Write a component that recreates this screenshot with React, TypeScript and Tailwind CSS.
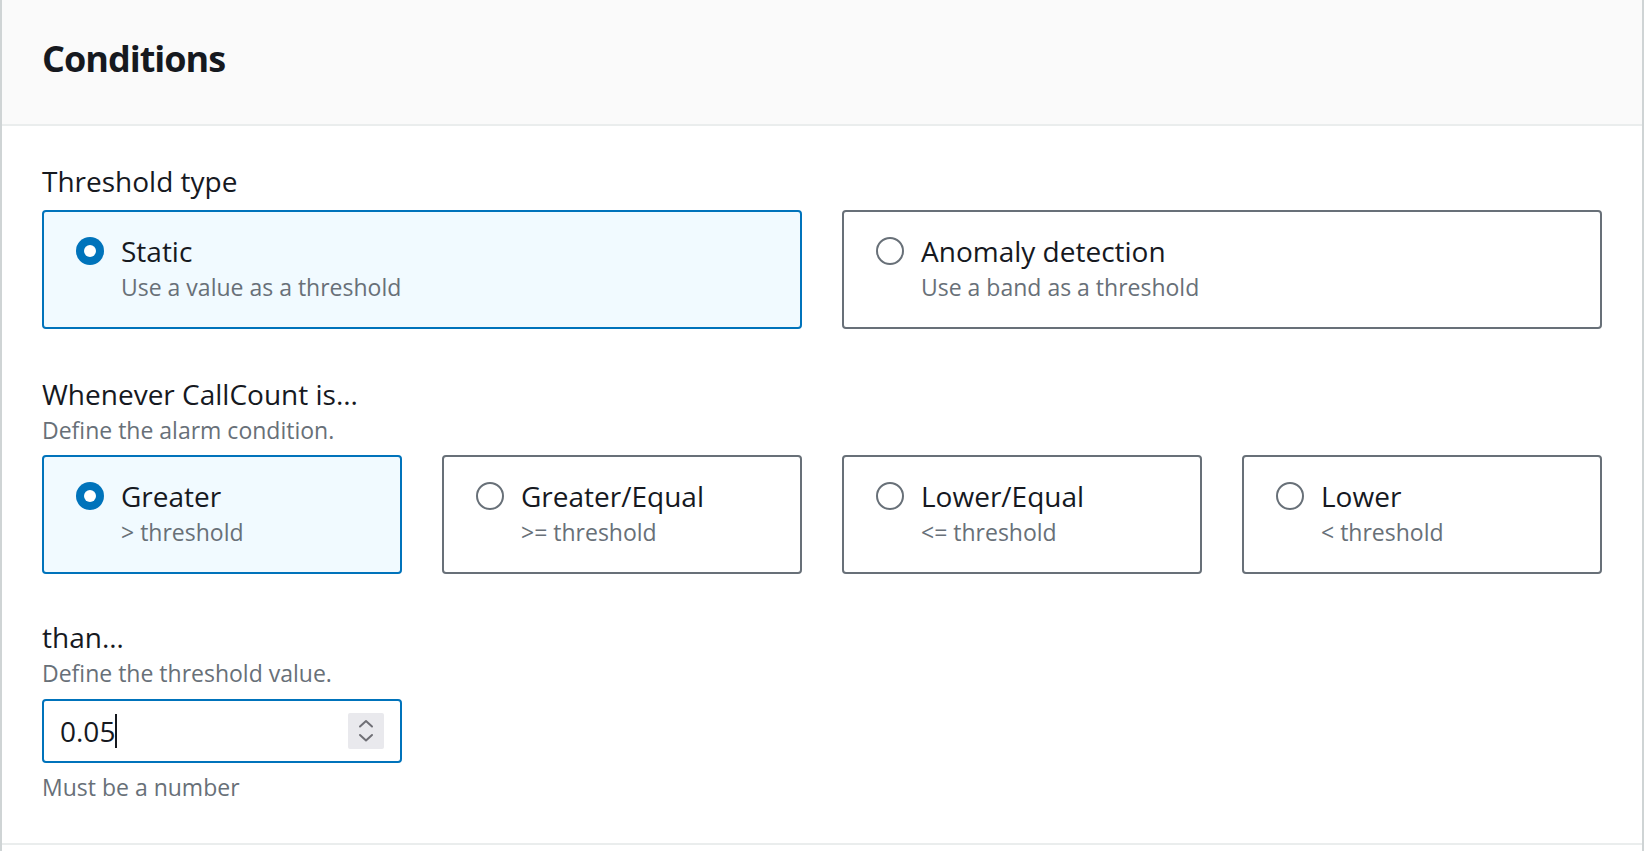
import React from "react";

function Radio({ checked }: { checked: boolean }) {
  return checked ? (
    <span className="mt-[6px] flex h-[28px] w-[28px] shrink-0 items-center justify-center rounded-full bg-[#0073bb]">
      <span className="h-[12px] w-[12px] rounded-full bg-white" />
    </span>
  ) : (
    <span className="mt-[6px] h-[28px] w-[28px] shrink-0 rounded-full border-2 border-[#687078] bg-white" />
  );
}

function Card({ title, desc, checked }: { title: string; desc: string; checked: boolean }) {
  return (
    <div
      className={
        checked
          ? "flex gap-[17px] rounded-[4px] border-2 border-[#0073bb] bg-[#f1faff] pl-[32px] pr-[20px] pt-[19px] pb-[24px]"
          : "flex gap-[17px] rounded-[4px] border-2 border-[#687078] bg-white pl-[32px] pr-[20px] pt-[19px] pb-[24px]"
      }
    >
      <Radio checked={checked} />
      <div>
        <div className="text-[28px] leading-[40px] text-[#16191f]">{title}</div>
        <div className="text-[23px] leading-[32px] text-[#687078]">{desc}</div>
      </div>
    </div>
  );
}

export default function App() {
  return (
    <div className="min-h-screen bg-white font-['Open_Sans',sans-serif] text-[#16191f]">
      <div className="min-h-screen border-x-2 border-[#cfd4d5]">
        <div className="h-[126px] border-b-2 border-[#eaeded] bg-[#fafafa] px-[40px] pt-[37px]">
          <h2 className="text-[36px] font-bold leading-[44px] tracking-[-1px] text-[#16191f]">Conditions</h2>
        </div>
        <div className="border-b-2 border-[#eaeded] px-[40px] pt-[35px] pb-[40px]">
          <div>
            <div className="text-[28px] leading-[40px]">Threshold type</div>
            <div className="mt-[9px] grid grid-cols-2 gap-[40px]">
              <Card checked title="Static" desc="Use a value as a threshold" />
              <Card checked={false} title="Anomaly detection" desc="Use a band as a threshold" />
            </div>
          </div>

          <div className="mt-[45px]">
            <div className="text-[28px] leading-[40px]">Whenever CallCount is...</div>
            <div className="text-[23px] leading-[32px] text-[#687078]">Define the alarm condition.</div>
            <div className="mt-[9px] grid grid-cols-4 gap-[40px]">
              <Card checked title="Greater" desc="> threshold" />
              <Card checked={false} title="Greater/Equal" desc=">= threshold" />
              <Card checked={false} title="Lower/Equal" desc="<= threshold" />
              <Card checked={false} title="Lower" desc="< threshold" />
            </div>
          </div>

          <div className="mt-[43px]">
            <div className="text-[28px] leading-[40px]">than…</div>
            <div className="text-[23px] leading-[32px] text-[#687078]">Define the threshold value.</div>
            <div className="mt-[10px] flex h-[64px] w-[360px] items-center justify-between rounded-[4px] border-2 border-[#0073bb] bg-white pl-[16px] pr-[16px]">
              <div className="flex items-center">
                <span className="text-[28px] leading-[40px] text-[#16191f]">0.05</span>
                <span className="h-[34px] w-[2px] bg-[#16191f]" />
              </div>
              <div className="flex h-[36px] w-[36px] items-center justify-center rounded-[2px] bg-[#e9e9ed]">
                <svg width="36" height="36" viewBox="0 0 36 36" fill="none" stroke="#6f6f75" strokeWidth="2" strokeLinecap="round" strokeLinejoin="round">
                  <polyline points="12,13.5 18,8 24,13.5" />
                  <polyline points="12,22 18,27.5 24,22" />
                </svg>
              </div>
            </div>
            <div className="mt-[8px] text-[23px] leading-[32px] text-[#687078]">Must be a number</div>
          </div>
        </div>
      </div>
    </div>
  );
}
